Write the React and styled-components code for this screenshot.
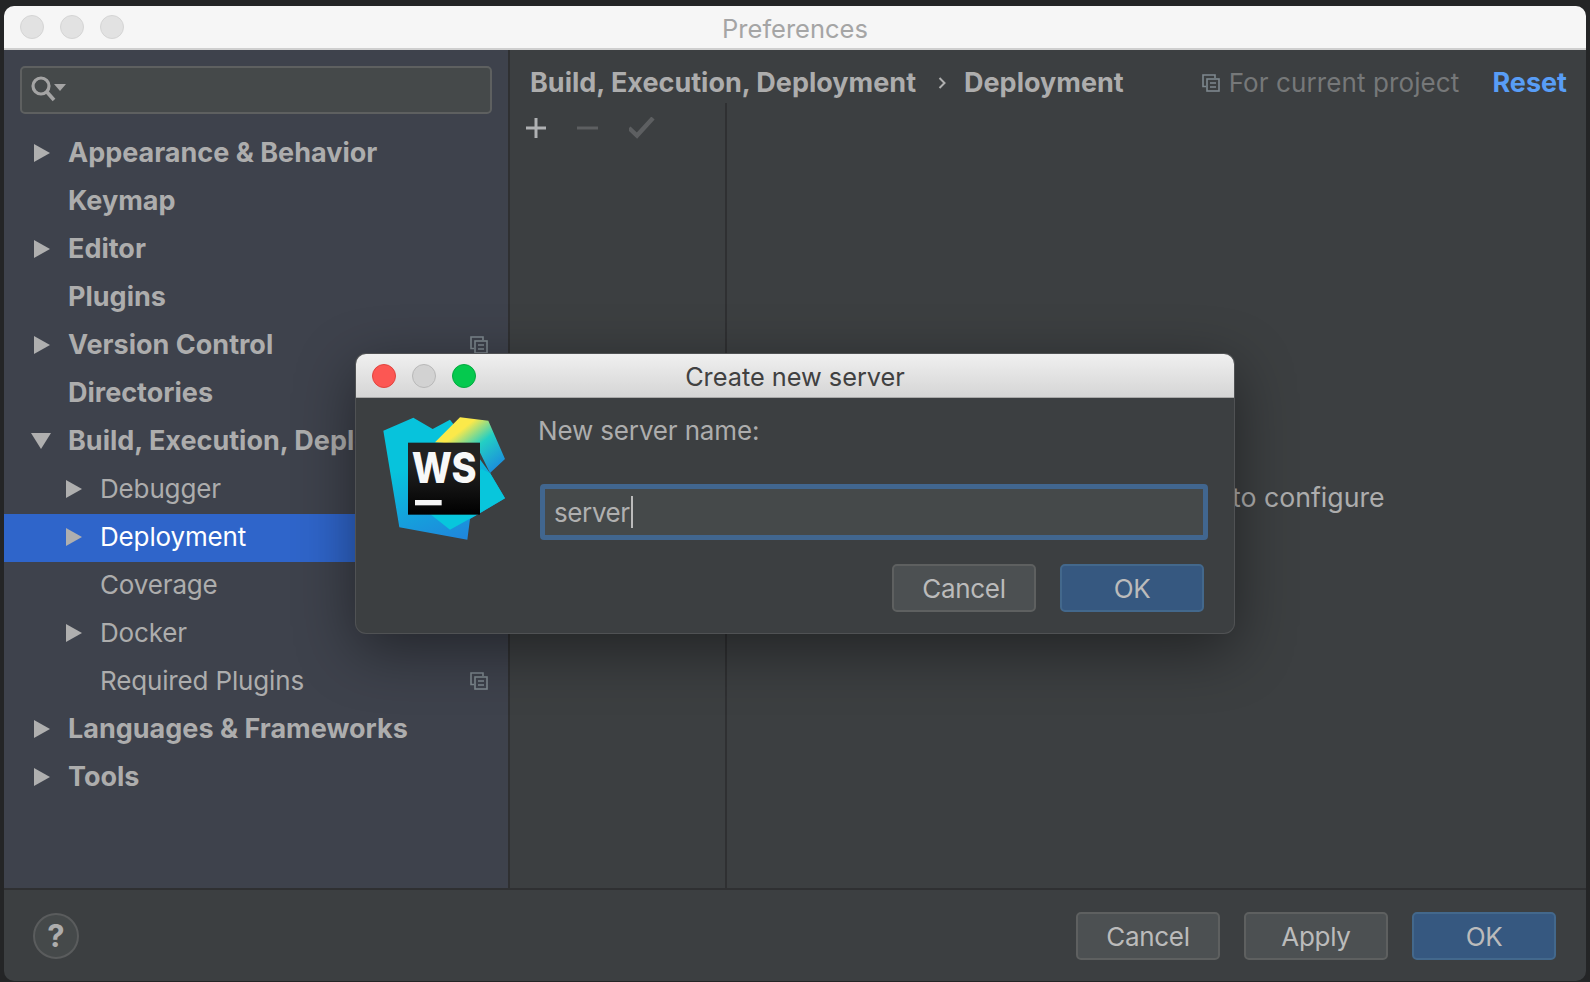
import styled, { createGlobalStyle } from "styled-components";

const GlobalStyle = createGlobalStyle`
  html, body {
    margin: 0;
    height: 100%;
    background: #242526;
    overflow: hidden;
  }
  * {
    box-sizing: border-box;
  }
`;

const FONT = `Inter, "Noto Sans", "Liberation Sans", sans-serif`;

const TREE = [
  { label: "Appearance & Behavior", bold: true, arrow: "right" },
  { label: "Keymap", bold: true },
  { label: "Editor", bold: true, arrow: "right" },
  { label: "Plugins", bold: true },
  { label: "Version Control", bold: true, arrow: "right", project: true },
  { label: "Directories", bold: true },
  { label: "Build, Execution, Deployment", bold: true, arrow: "down" },
  { label: "Debugger", level: 1, arrow: "right" },
  { label: "Deployment", level: 1, arrow: "right", selected: true },
  { label: "Coverage", level: 1 },
  { label: "Docker", level: 1, arrow: "right" },
  { label: "Required Plugins", level: 1, project: true },
  { label: "Languages & Frameworks", bold: true, arrow: "right" },
  { label: "Tools", bold: true, arrow: "right" },
];

export default function App() {
  return (
    <Page>
      <GlobalStyle />
      <Window>
        <TitleBar>
          <Lights>
            <Light />
            <Light />
            <Light />
          </Lights>
          <WindowTitle>Preferences</WindowTitle>
        </TitleBar>

        <Body>
          <Sidebar>
            <SearchBox>
              <SearchIcon />
            </SearchBox>
            <Tree>
              {TREE.map((item) => (
                <Row key={item.label} $level={item.level || 0} $selected={item.selected}>
                  <ArrowSlot>{item.arrow && <Arrow dir={item.arrow} />}</ArrowSlot>
                  <RowLabel $bold={item.bold} $selected={item.selected}>
                    {item.label}
                  </RowLabel>
                  {item.project && (
                    <RowBadge>
                      <ProjectIcon />
                    </RowBadge>
                  )}
                </Row>
              ))}
            </Tree>
          </Sidebar>

          <Main>
            <Header>
              <Crumb>Build, Execution, Deployment</Crumb>
              <CrumbChevron />
              <Crumb>Deployment</Crumb>
              <Scope>
                <ProjectIcon />
                <span>For current project</span>
              </Scope>
              <ResetLink>Reset</ResetLink>
            </Header>
            <Panes>
              <ServerPane>
                <Toolbar>
                  <PlusIcon />
                  <MinusIcon />
                  <CheckIcon />
                </Toolbar>
              </ServerPane>
              <DetailPane>Please add a web server to configure</DetailPane>
            </Panes>
          </Main>
        </Body>

        <Footer>
          <HelpButton>?</HelpButton>
          <FooterActions>
            <Button>Cancel</Button>
            <Button>Apply</Button>
            <Button $primary>OK</Button>
          </FooterActions>
        </Footer>
      </Window>

      <Dialog>
        <DialogTitleBar>
          <Lights>
            <Light $color="#fc5753" $edge="#e0443e" />
            <Light $color="#d2d2d2" $edge="#b8b8b8" />
            <Light $color="#05c94e" $edge="#04a93f" />
          </Lights>
          <DialogTitle>Create new server</DialogTitle>
        </DialogTitleBar>
        <DialogBody>
          <WebStormLogo />
          <DialogForm>
            <FieldLabel>New server name:</FieldLabel>
            <NameInput>
              server
              <Caret />
            </NameInput>
            <DialogActions>
              <Button>Cancel</Button>
              <Button $primary>OK</Button>
            </DialogActions>
          </DialogForm>
        </DialogBody>
      </Dialog>
    </Page>
  );
}

function Arrow({ dir }) {
  if (dir === "down") {
    return (
      <svg width="20" height="16" viewBox="0 0 20 16" style={{ marginLeft: -3 }}>
        <path d="M0 0H20L10 16Z" fill="#afafaf" />
      </svg>
    );
  }
  return (
    <svg width="16" height="18" viewBox="0 0 16 18">
      <path d="M0 0L16 9L0 18Z" fill="#afafaf" />
    </svg>
  );
}

function ProjectIcon() {
  return (
    <svg width="18" height="18" viewBox="0 0 18 18" fill="none" stroke="#7d888e" strokeWidth="1.6">
      <path d="M4 12.5H1V1H13V4" />
      <rect x="5" y="5" width="12" height="12" />
      <path d="M8 9H14M8 13H14" />
    </svg>
  );
}

function SearchIcon() {
  return (
    <svg width="36" height="26" viewBox="0 0 36 26" fill="none">
      <circle cx="10" cy="10" r="8" stroke="#a4a4a4" strokeWidth="3.2" />
      <path d="M15.5 15.5L23 24" stroke="#a4a4a4" strokeWidth="3.6" />
      <path d="M23 8H35L29 15Z" fill="#a4a4a4" />
    </svg>
  );
}

function CrumbChevron() {
  return (
    <ChevronBox>
      <svg width="8" height="12" viewBox="0 0 8 12" fill="none">
        <path d="M1.5 1L6.5 6L1.5 11" stroke="#b0b0b0" strokeWidth="2" />
      </svg>
    </ChevronBox>
  );
}

function PlusIcon() {
  return (
    <svg width="20" height="20" viewBox="0 0 20 20">
      <path d="M8.5 0H11.5V8.5H20V11.5H11.5V20H8.5V11.5H0V8.5H8.5Z" fill="#afb1b3" />
    </svg>
  );
}

function MinusIcon() {
  return (
    <svg width="21" height="20" viewBox="0 0 21 20">
      <path d="M0 8.5H21V11.5H0Z" fill="#5d5f61" />
    </svg>
  );
}

function CheckIcon() {
  return (
    <svg width="28" height="22" viewBox="2 1 28 22" fill="none">
      <path d="M2 12L10 19.5L26 2" stroke="#5d5f61" strokeWidth="4.4" />
    </svg>
  );
}

function WebStormLogo() {
  return (
    <LogoBox>
      <svg width="124" height="124" viewBox="90 205 372 372" overflow="visible">
        <defs>
          <linearGradient id="wsBlue" x1="0.25" y1="0" x2="0.6" y2="1">
            <stop offset="0.35" stopColor="#07c3dc" />
            <stop offset="1" stopColor="#1f87dc" />
          </linearGradient>
          <linearGradient id="wsTop" x1="0.2" y1="0.1" x2="0.95" y2="0.85">
            <stop offset="0.2" stopColor="#fbe94a" />
            <stop offset="0.55" stopColor="#23cfc4" />
            <stop offset="1" stopColor="#1b8fdc" />
          </linearGradient>
          <linearGradient id="wsTile" x1="0" y1="0" x2="0" y2="1">
            <stop offset="0.3" stopColor="#222222" />
            <stop offset="1" stopColor="#000000" />
          </linearGradient>
        </defs>
        <path
          d="M100 255L190 216L248 250L300 222L360 300L420 382L465 458L360 520L352 582L148 545Z"
          fill="url(#wsBlue)"
        />
        <path d="M255 290L330 215L415 225L465 340L420 382L380 300Z" fill="url(#wsTop)" />
        <path d="M395 370L420 382L465 458L385 505L300 552L240 505Z" fill="#08c6dc" />
        <rect x="174" y="291" width="216" height="216" fill="url(#wsTile)" />
        <LogoLetters x="185" y="412" textLength="195" lengthAdjust="spacingAndGlyphs">
          WS
        </LogoLetters>
        <rect x="195" y="463" width="80" height="16" fill="#f5f5f5" />
      </svg>
    </LogoBox>
  );
}

const Page = styled.div`
  position: relative;
  height: 982px;
  padding: 6px 4px 1px;
  font-family: ${FONT};
  font-size: 26px;
  color: #adadad;
`;

const Window = styled.div`
  display: flex;
  flex-direction: column;
  height: 100%;
  border-radius: 10px;
  overflow: hidden;
  background: #3c3f41;
`;

const TitleBar = styled.div`
  display: grid;
  grid-template-columns: 1fr auto 1fr;
  align-items: center;
  flex: none;
  height: 44px;
  background: #f6f6f6;
  border-bottom: 2px solid #cfcfcf;
`;

const Lights = styled.div`
  display: flex;
  gap: 16px;
  margin-left: 16px;
`;

const Light = styled.div`
  width: 24px;
  height: 24px;
  border-radius: 50%;
  background: ${(p) => p.$color || "#e2e2e2"};
  border: 1px solid ${(p) => p.$edge || "#d4d4d4"};
`;

const WindowTitle = styled.div`
  padding-top: 2px;
  font-size: 25.5px;
  color: #a5a5a5;
`;

const Body = styled.div`
  display: flex;
  flex: 1;
  min-height: 0;
`;

const Sidebar = styled.div`
  flex: none;
  width: 506px;
  padding-top: 16px;
  background: #3e424c;
  border-right: 2px solid #2f3032;
`;

const SearchBox = styled.div`
  display: flex;
  align-items: center;
  height: 48px;
  margin: 0 16px;
  padding: 0 0 2px 9px;
  background: #45494a;
  border: 2px solid #5e6060;
  border-radius: 5px;
`;

const Tree = styled.div`
  margin-top: 16px;
`;

const Row = styled.div`
  display: flex;
  align-items: center;
  height: 48px;
  padding-left: ${(p) => 30 + p.$level * 32}px;
  padding-right: 20px;
  background: ${(p) => (p.$selected ? "#2f65ca" : "transparent")};
`;

const ArrowSlot = styled.div`
  display: flex;
  align-items: center;
  flex: none;
  width: 34px;
  margin-bottom: 2px;
`;

const RowLabel = styled.span`
  margin-bottom: 4px;
  font-size: ${(p) => (p.$bold ? 27 : 26)}px;
  font-weight: ${(p) => (p.$bold ? 700 : 400)};
  letter-spacing: ${(p) => (p.$bold ? 0 : -0.15)}px;
  color: ${(p) => (p.$selected ? "#ffffff" : "#adadad")};
  white-space: nowrap;
`;

const RowBadge = styled.div`
  display: flex;
  margin: 0 0 2px auto;
`;

const Main = styled.div`
  display: flex;
  flex-direction: column;
  flex: 1;
  min-width: 0;
`;

const Header = styled.div`
  display: flex;
  align-items: center;
  flex: none;
  height: 65px;
  margin-bottom: -12px;
  padding: 0 19px 0 20px;
`;

const Crumb = styled.span`
  font-size: 27px;
  font-weight: 700;
  color: #adadad;
  white-space: nowrap;
`;

const ChevronBox = styled.span`
  display: flex;
  margin: 0 18px 0 22px;
`;

const Scope = styled.div`
  display: flex;
  align-items: center;
  gap: 9px;
  margin-left: auto;
  letter-spacing: 0.1px;
  color: #767879;
`;

const ResetLink = styled.span`
  margin-left: 33px;
  font-size: 27px;
  font-weight: 700;
  color: #589df6;
`;

const Panes = styled.div`
  display: flex;
  flex: 1;
  min-height: 0;
`;

const ServerPane = styled.div`
  flex: none;
  width: 217px;
  border-right: 2px solid #2f3032;
`;

const Toolbar = styled.div`
  display: flex;
  align-items: center;
  gap: 31px;
  height: 50px;
  padding-left: 16px;
`;

const DetailPane = styled.div`
  display: flex;
  align-items: center;
  justify-content: center;
  flex: 1;
  min-width: 0;
  padding: 2px 14px 0 0;
  font-size: 26.7px;
`;

const Footer = styled.div`
  display: flex;
  align-items: center;
  justify-content: space-between;
  flex: none;
  height: 93px;
  padding: 0 30px 0 29px;
  border-top: 2px solid #2f3032;
`;

const HelpButton = styled.div`
  display: flex;
  align-items: center;
  justify-content: center;
  width: 46px;
  height: 46px;
  border-radius: 50%;
  font-size: 31px;
  font-weight: 700;
  background: #45494a;
  border: 2px solid #5a5c5d;
`;

const FooterActions = styled.div`
  display: flex;
  gap: 24px;
`;

const Button = styled.div`
  display: flex;
  align-items: center;
  justify-content: center;
  width: 144px;
  height: 48px;
  padding-top: 1px;
  border-radius: 5px;
  letter-spacing: -0.3px;
  color: #bbbbbb;
  background: ${(p) => (p.$primary ? "#365880" : "#4c5052")};
  border: 2px solid ${(p) => (p.$primary ? "#43688c" : "#5e6060")};
`;

const Dialog = styled.div`
  position: absolute;
  top: 354px;
  left: 356px;
  width: 878px;
  height: 279px;
  display: flex;
  flex-direction: column;
  overflow: hidden;
  border-radius: 10px;
  background: #3c3f41;
  box-shadow: 0 0 0 1px #505254, 0 16px 60px rgba(0, 0, 0, 0.45);
`;

const DialogTitleBar = styled.div`
  display: grid;
  grid-template-columns: 1fr auto 1fr;
  align-items: center;
  flex: none;
  height: 44px;
  background: linear-gradient(#f0f0f0, #d5d5d5);
  border-bottom: 1px solid #a9a9a9;
`;

const DialogTitle = styled.div`
  padding-top: 2px;
  font-size: 25.3px;
  color: #414141;
`;

const DialogBody = styled.div`
  display: flex;
  flex: 1;
  padding: 19px 30px 0 27px;
`;

const LogoBox = styled.div`
  flex: none;
  width: 160px;
  margin: -3px 0 0 -3px;
`;

const LogoLetters = styled.text`
  font-family: ${FONT};
  font-size: 129px;
  font-weight: 800;
  fill: #f8f8f8;
`;

const DialogForm = styled.div`
  display: flex;
  flex-direction: column;
  flex: 1;
  min-width: 0;
`;

const FieldLabel = styled.div`
  height: 32px;
  margin: -2px 0 0 -2px;
  line-height: 32px;
  letter-spacing: -0.15px;
  color: #adadad;
`;

const NameInput = styled.div`
  display: flex;
  align-items: center;
  width: 668px;
  height: 56px;
  margin-top: 37px;
  padding-left: 9px;
  background: #45494a;
  border: 5px solid #41668f;
  border-radius: 4px;
  letter-spacing: -0.4px;
  color: #b0b0b0;
`;

const Caret = styled.span`
  width: 2px;
  height: 32px;
  margin-left: 1px;
  background: #bbbbbb;
`;

const DialogActions = styled.div`
  display: flex;
  justify-content: flex-end;
  gap: 24px;
  margin-top: 24px;
`;
